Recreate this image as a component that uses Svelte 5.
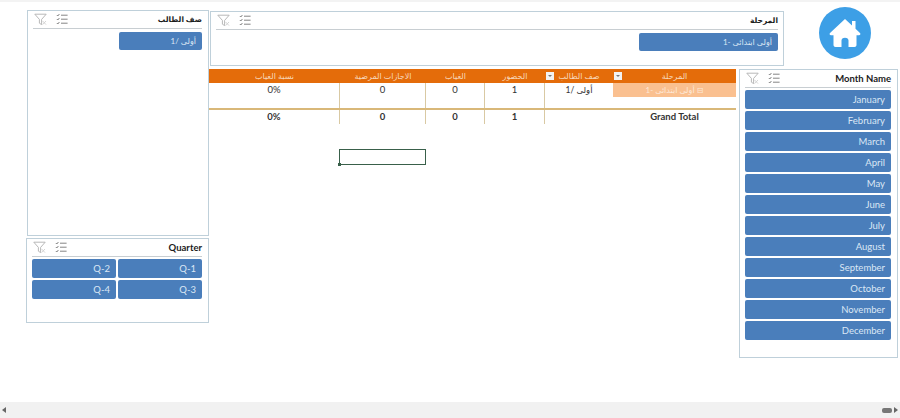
<script>
	const months = ['January', 'February', 'March', 'April', 'May', 'June', 'July', 'August', 'September', 'October', 'November', 'December'];
	const quarters = ['Q-2', 'Q-1', 'Q-4', 'Q-3'];
</script>

{#snippet tools()}
	<div class="tools">
		<svg width="13" height="13" viewBox="0 0 13 13" fill="none" stroke="#b0b0b0" stroke-width="0.9">
			<path d="M0.8 1.2h11.400L7.600 6.400v5.200L5.400 10.200V6.400z" />
			<path d="M8.600 8l3.400 3.600M12 8l-3.400 3.600" stroke="#cfcfcf" />
		</svg>
		<svg width="12" height="12" viewBox="0 0 12 12" fill="none" stroke="#777" stroke-width="0.9">
			<path d="M0.800 2l1 1 1.600-2M0.800 6l1 1 1.600-2M0.800 10l1 1 1.600-2" />
			<path d="M5 2.200h6.600M5 6.200h6.600M5 10.200h6.600" />
		</svg>
	</div>
{/snippet}

<div class="sheet">
	<div class="left">
		<section class="slicer grade">
			<header>{@render tools()}<h3 class="ar">صف الطالب</h3></header>
			<div class="list">
				<button class="half ar">أولى /1</button>
			</div>
		</section>
		<section class="slicer quarter">
			<header>{@render tools()}<h3>Quarter</h3></header>
			<div class="list q-grid">
				{#each quarters as q}
					<button>{q}</button>
				{/each}
			</div>
		</section>
	</div>

	<section class="slicer stage">
		<header>{@render tools()}<h3 class="ar">المرحلة</h3></header>
		<div class="list">
			<button class="wide ar">أولى ابتدائى -1</button>
		</div>
	</section>

	<div class="home">
		<svg width="52" height="52" viewBox="0 0 52 52">
			<circle cx="26" cy="26" r="26" fill="#3d9fe6" />
			<path fill="#fff" d="M26 12 11 26c-.9 1-.2 2.200 1 2.200h2.500V38c0 1.200.9 2 2 2h6v-6.500c0-1.600 1.200-2.800 3.500-2.800s3.500 1.200 3.500 2.800V40h6c1.100 0 2-.8 2-2v-9.800H40c1.200 0 1.900-1.200 1-2.200l-4.500-4.300V14h-3.500v4.400z" />
		</svg>
	</div>

	<div class="pivot">
		<div class="row head">
			<div>نسبة الغياب</div>
			<div>الاجازات المرضية</div>
			<div>الغياب</div>
			<div>الحضور</div>
			<div class="drop"><span class="arrow"></span>صف الطالب</div>
			<div class="drop"><span class="arrow"></span>المرحلة</div>
		</div>
		<div class="row">
			<div>0%</div>
			<div>0</div>
			<div>0</div>
			<div>1</div>
			<div class="ar-cell">أولى /1</div>
			<div class="stage-cell">أولى ابتدائى -1 ⊟</div>
		</div>
		<div class="row blank">
			<div></div><div></div><div></div><div></div><div></div><div></div>
		</div>
		<div class="row total">
			<div>0%</div>
			<div>0</div>
			<div>0</div>
			<div>1</div>
			<div></div>
			<div>Grand Total</div>
		</div>
		<div class="selected"></div>
	</div>

	<section class="slicer month">
		<header>{@render tools()}<h3>Month Name</h3></header>
		<div class="list months">
			{#each months as m}
				<button>{m}</button>
			{/each}
		</div>
	</section>
</div>

<div class="scrollbar">
	<span class="tri left-tri"></span>
	<span class="thumb"></span>
	<span class="tri right-tri"></span>
</div>

<style>
	:global(body) {
		background: #fff;
		overflow: hidden;
	}

	.sheet {
		box-sizing: border-box;
		height: 402px;
		padding: 8px 0 0 26px;
		border-top: 2px solid #f3f3f3;
		display: grid;
		grid-template-columns: 183px 527px 48px 116px;
		grid-template-rows: 59px 1fr;
		font-family: Lato, "DejaVu Sans", sans-serif;
	}

	.left {
		grid-row: 1 / 3;
		display: flex;
		flex-direction: column;
		align-items: flex-end;
		gap: 2px;
	}

	.slicer {
		box-sizing: border-box;
		border: 1px solid #bfd0da;
		background: #fff;
		padding: 0 6px 0 5px;
		display: flex;
		flex-direction: column;
	}

	header {
		box-sizing: border-box;
		height: 18px;
		display: flex;
		justify-content: space-between;
		align-items: center;
		border-bottom: 1px solid #c8ced2;
		padding: 0 0 1px 1px;
	}

	.tools {
		display: flex;
		align-items: center;
		gap: 9px;
	}

	h3 {
		margin: 0;
		font-size: 9.5px;
		font-weight: 700;
		color: #1c1c1c;
	}

	h3.ar {
		font-size: 7.5px;
	}

	.list {
		display: flex;
		flex-direction: column;
		align-items: flex-end;
		padding-top: 3px;
	}

	button {
		box-sizing: border-box;
		height: 19px;
		width: 100%;
		border: 0;
		border-radius: 2px;
		background: #4a7ebb;
		color: #dbe7f5;
		font-family: inherit;
		font-size: 9.5px;
		text-align: right;
		padding: 0 6px;
	}

	button.ar {
		font-size: 8px;
	}

	.grade {
		width: 182px;
		height: 226px;
	}

	.half {
		width: 83px;
		height: 18px;
	}

	.quarter {
		width: 183px;
		height: 85px;
	}

	.q-grid {
		display: grid;
		grid-template-columns: 84px 84px;
		justify-content: end;
		gap: 2px;
		padding-top: 2px;
	}

	.stage {
		grid-column: 2 / 4;
		margin: 1px 0 0 1px;
		height: 55px;
		width: 574px;
		padding-right: 5px;
	}

	.wide {
		width: 139px;
		height: 18px;
	}

	.home {
		padding-left: 35px;
		margin-top: -3px;
	}

	.pivot {
		position: relative;
		font-size: 9.5px;
		color: #333;
	}

	.row {
		display: grid;
		grid-template-columns: 131px 86px 59px 60px 68px 123px;
		height: 14px;
		text-align: center;
	}

	.row > div {
		line-height: 14px;
	}

	.row > div:nth-child(-n + 4) {
		border-right: 1px solid #d9c9a3;
	}

	.row.head {
		background: #e46c0a;
		color: #f8d9bd;
		font-size: 8px;
	}

	.row.head > div {
		border: 0;
	}

	.drop {
		position: relative;
	}

	.arrow {
		position: absolute;
		left: 1px;
		top: 3px;
		width: 8px;
		height: 8px;
		background: #f2f2f2;
	}

	.arrow::after {
		content: "";
		position: absolute;
		left: 2px;
		top: 3px;
		border-left: 2px solid transparent;
		border-right: 2px solid transparent;
		border-top: 2px solid #777;
	}

	.ar-cell {
		font-size: 8.5px;
	}

	.row > .stage-cell {
		background: #fac090;
		color: #fde9d9;
		font-size: 8px;
	}

	.row.blank {
		height: 11px;
		border-bottom: 2px solid #d9b879;
	}

	.total {
		font-weight: 700;
	}

	.selected {
		position: absolute;
		left: 130px;
		top: 80px;
		width: 87px;
		height: 16px;
		box-sizing: border-box;
		border: 1px solid #39604a;
	}

	.selected::after {
		content: "";
		position: absolute;
		left: -2px;
		bottom: -2px;
		width: 3px;
		height: 3px;
		background: #39604a;
	}

	.month {
		grid-column: 3 / 5;
		margin-left: 3px;
		height: 289px;
		width: 159px;
	}

	.months {
		gap: 2px;
		padding-top: 2px;
	}

	.scrollbar {
		height: 16px;
		background: #f1f1f1;
		position: relative;
		display: flex;
		align-items: center;
		justify-content: space-between;
		padding: 0 2px;
		box-sizing: border-box;
	}

	.thumb {
		position: absolute;
		left: 882px;
		top: 6px;
		width: 10px;
		height: 5px;
		border-radius: 2px;
		background: #777;
	}

	.tri {
		width: 0;
		height: 0;
		border-top: 3px solid transparent;
		border-bottom: 3px solid transparent;
	}

	.left-tri {
		border-right: 4px solid #666;
	}

	.right-tri {
		border-left: 4px solid #666;
	}
</style>
